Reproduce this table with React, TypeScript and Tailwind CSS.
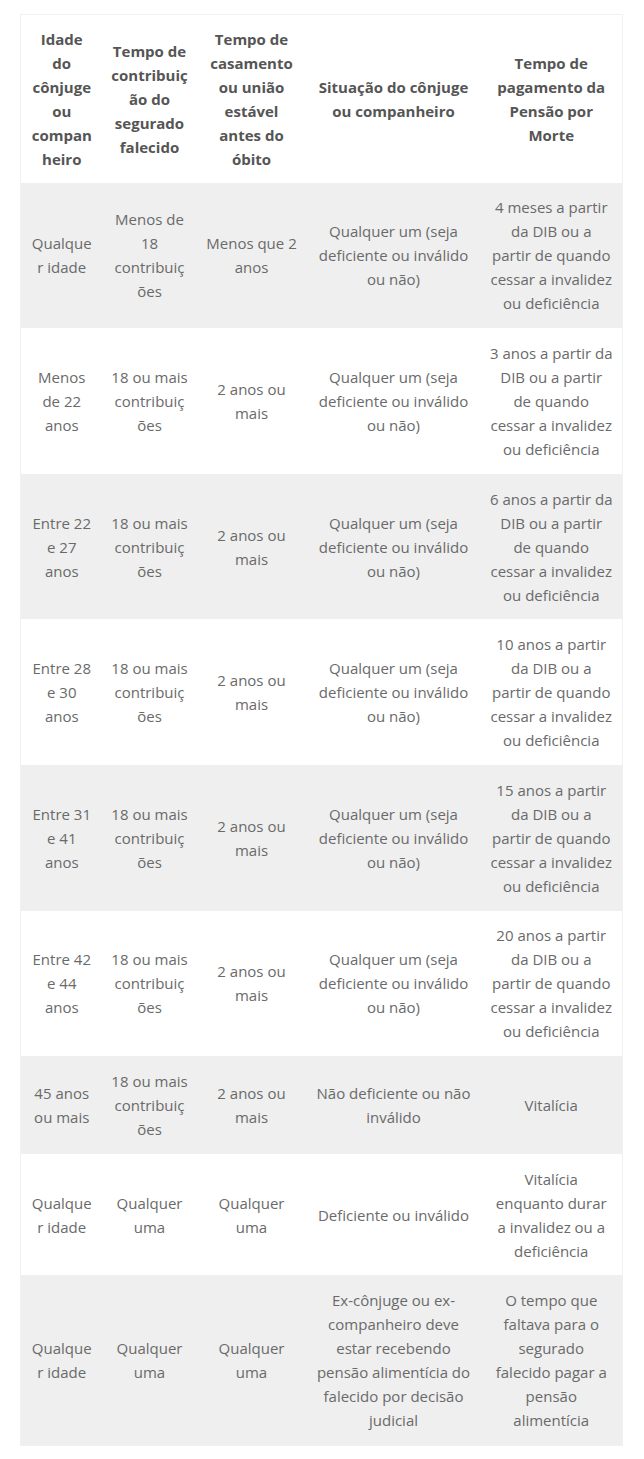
import React from 'react';

type Row = string[][];

const header: Row = [
  ['Idade', 'do', 'cônjuge', 'ou', 'compan', 'heiro'],
  ['Tempo de', 'contribuiç', 'ão do', 'segurado', 'falecido'],
  ['Tempo de', 'casamento', 'ou união', 'estável', 'antes do', 'óbito'],
  ['Situação do cônjuge', 'ou companheiro'],
  ['Tempo de', 'pagamento da', 'Pensão por', 'Morte'],
];

const qualquerUm = ['Qualquer um (seja', 'deficiente ou inválido', 'ou não)'];
const dezoito = ['18 ou mais', 'contribuiç', 'ões'];
const doisAnos = ['2 anos ou', 'mais'];

const rows: Row[] = [
  [
    ['Qualque', 'r idade'],
    ['Menos de', '18', 'contribuiç', 'ões'],
    ['Menos que 2', 'anos'],
    qualquerUm,
    ['4 meses a partir', 'da DIB ou a', 'partir de quando', 'cessar a invalidez', 'ou deficiência'],
  ],
  [
    ['Menos', 'de 22', 'anos'],
    dezoito,
    doisAnos,
    qualquerUm,
    ['3 anos a partir da', 'DIB ou a partir', 'de quando', 'cessar a invalidez', 'ou deficiência'],
  ],
  [
    ['Entre 22', 'e 27', 'anos'],
    dezoito,
    doisAnos,
    qualquerUm,
    ['6 anos a partir da', 'DIB ou a partir', 'de quando', 'cessar a invalidez', 'ou deficiência'],
  ],
  [
    ['Entre 28', 'e 30', 'anos'],
    dezoito,
    doisAnos,
    qualquerUm,
    ['10 anos a partir', 'da DIB ou a', 'partir de quando', 'cessar a invalidez', 'ou deficiência'],
  ],
  [
    ['Entre 31', 'e 41', 'anos'],
    dezoito,
    doisAnos,
    qualquerUm,
    ['15 anos a partir', 'da DIB ou a', 'partir de quando', 'cessar a invalidez', 'ou deficiência'],
  ],
  [
    ['Entre 42', 'e 44', 'anos'],
    dezoito,
    doisAnos,
    qualquerUm,
    ['20 anos a partir', 'da DIB ou a', 'partir de quando', 'cessar a invalidez', 'ou deficiência'],
  ],
  [
    ['45 anos', 'ou mais'],
    dezoito,
    doisAnos,
    ['Não deficiente ou não', 'inválido'],
    ['Vitalícia'],
  ],
  [
    ['Qualque', 'r idade'],
    ['Qualquer', 'uma'],
    ['Qualquer', 'uma'],
    ['Deficiente ou inválido'],
    ['Vitalícia', 'enquanto durar', 'a invalidez ou a', 'deficiência'],
  ],
  [
    ['Qualque', 'r idade'],
    ['Qualquer', 'uma'],
    ['Qualquer', 'uma'],
    ['Ex-cônjuge ou ex-', 'companheiro deve', 'estar recebendo', 'pensão alimentícia do', 'falecido por decisão', 'judicial'],
    ['O tempo que', 'faltava para o', 'segurado', 'falecido pagar a', 'pensão', 'alimentícia'],
  ],
];

const widths = ['w-[82px]', 'w-[94px]', 'w-[110px]', 'w-[174px]', 'w-[142px]'];

function Lines({ lines }: { lines: string[] }) {
  return (
    <>
      {lines.map((l, i) => (
        <span key={i} className="block whitespace-nowrap">
          {l}
        </span>
      ))}
    </>
  );
}

export default function App() {
  return (
    <div className="min-h-[1459px] bg-white pt-[14px] pl-[20px]" style={{ fontFamily: '"Open Sans", "DejaVu Sans", sans-serif' }}>
      <table className="w-[602px] table-fixed border-collapse border border-[#f1f1f1] text-[15px] leading-[24px]">
        <thead>
          <tr className="bg-white">
            {header.map((cell, i) => (
              <th
                key={i}
                className={`${widths[i]} px-0 py-[11.8px] text-center align-middle font-bold text-[#555555]`}
              >
                <Lines lines={cell} />
              </th>
            ))}
          </tr>
        </thead>
        <tbody>
          {rows.map((row, r) => (
            <tr key={r} className={r % 2 === 0 ? 'bg-[#efefef]' : 'bg-white'}>
              {row.map((cell, i) => (
                <td key={i} className="px-0 py-[12.8px] text-center align-middle text-[#6a6a6a]">
                  <Lines lines={cell} />
                </td>
              ))}
            </tr>
          ))}
        </tbody>
      </table>
    </div>
  );
}
